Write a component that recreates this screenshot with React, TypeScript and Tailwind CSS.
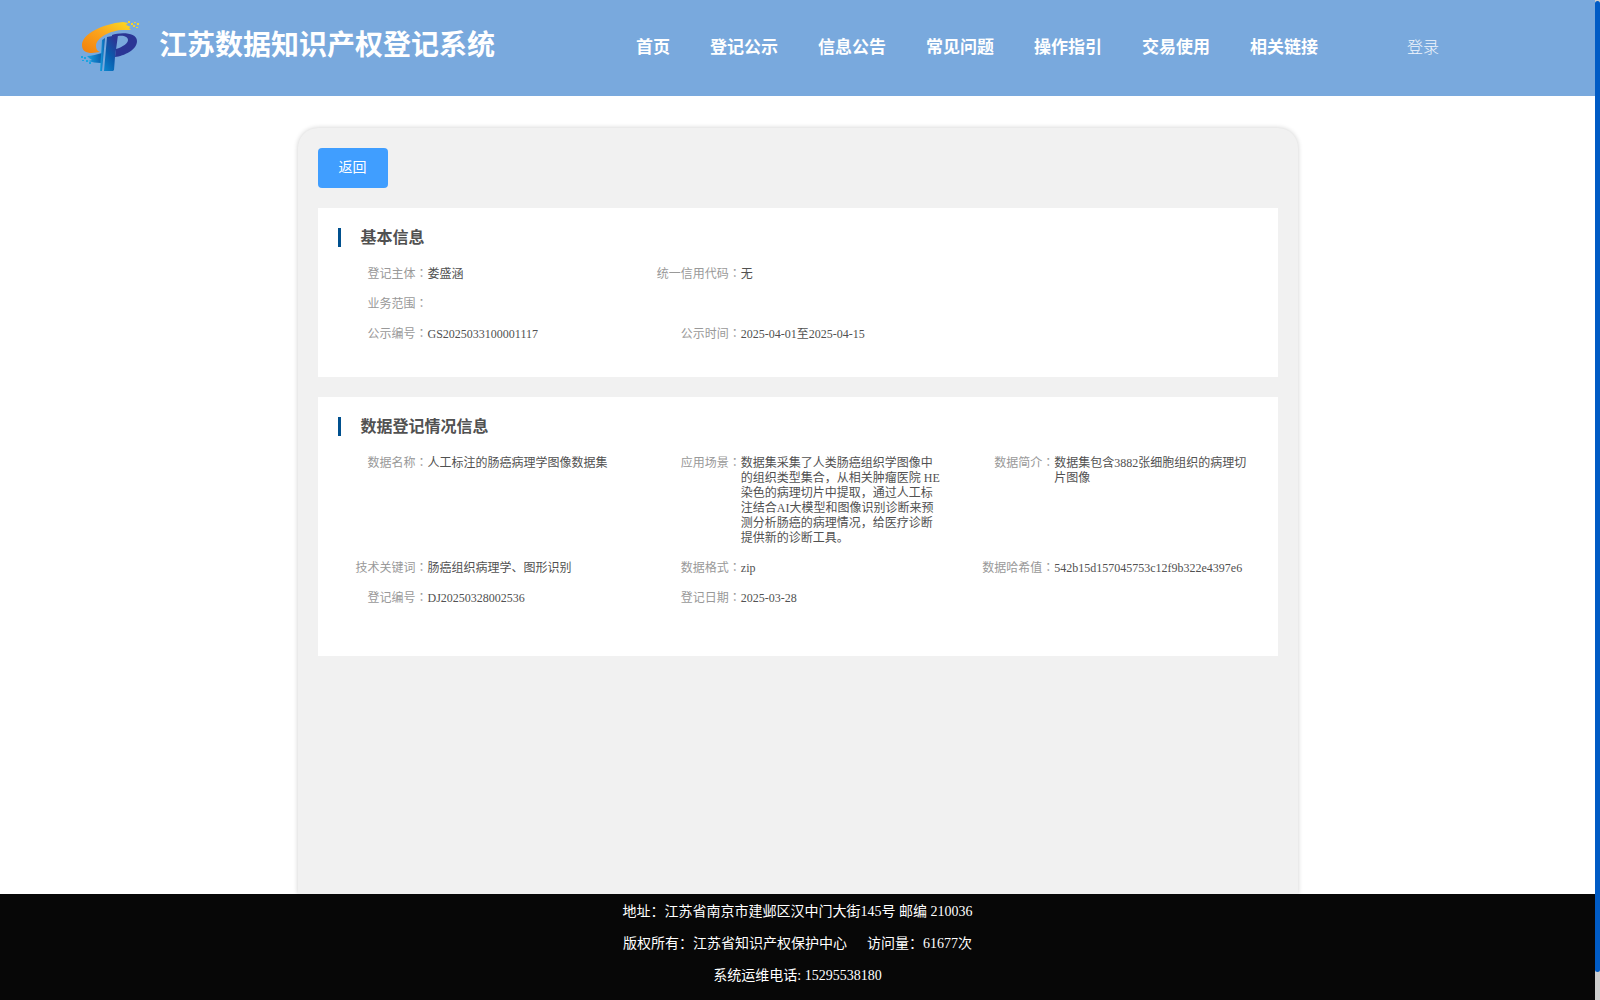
import React from "react";

const navItems = ["首页", "登记公示", "信息公告", "常见问题", "操作指引", "交易使用", "相关链接"];

type Item = { label: string; value: string };

const basicInfo: (Item | null)[] = [
  { label: "登记主体", value: "娄盛涵" },
  { label: "统一信用代码", value: "无" },
  null,
  { label: "业务范围", value: "" },
  null,
  null,
  { label: "公示编号", value: "GS2025033100001117" },
  { label: "公示时间", value: "2025-04-01至2025-04-15" },
];

const dataInfo: (Item | null)[] = [
  { label: "数据名称", value: "人工标注的肠癌病理学图像数据集" },
  {
    label: "应用场景",
    value:
      "数据集采集了人类肠癌组织学图像中的组织类型集合，从相关肿瘤医院 HE染色的病理切片中提取，通过人工标注结合AI大模型和图像识别诊断来预测分析肠癌的病理情况，给医疗诊断提供新的诊断工具。",
  },
  { label: "数据简介", value: "数据集包含3882张细胞组织的病理切片图像" },
  { label: "技术关键词", value: "肠癌组织病理学、图形识别" },
  { label: "数据格式", value: "zip" },
  { label: "数据哈希值", value: "542b15d157045753c12f9b322e4397e6" },
  { label: "登记编号", value: "DJ20250328002536" },
  { label: "登记日期", value: "2025-03-28" },
];

function Logo() {
  return (
    <svg viewBox="0 0 60 52" className="h-[52px] w-[60px] shrink-0" aria-hidden="true">
      <defs>
        <linearGradient id="swoosh" x1="0" y1="1" x2="1" y2="0">
          <stop offset="0" stopColor="#f07f0c" />
          <stop offset="0.5" stopColor="#fba31c" />
          <stop offset="1" stopColor="#fbdc22" />
        </linearGradient>
        <linearGradient id="stem" x1="0" y1="1" x2="0.6" y2="0">
          <stop offset="0" stopColor="#0a86cf" />
          <stop offset="0.5" stopColor="#0a5cad" />
          <stop offset="1" stopColor="#2b3695" />
        </linearGradient>
        <linearGradient id="tail" x1="0" y1="0" x2="1" y2="0">
          <stop offset="0" stopColor="#18a4e2" />
          <stop offset="1" stopColor="#0a5cad" />
        </linearGradient>
      </defs>
      <path d="M43 2 C22 4 2 14 2 25 C2 31 6 33 12 33 L20 32 C17 31 16 29 16 26 C16 18 30 10 44 10 L51 10 L49 8 L51 7 L46 5 L48 3 Z" fill="url(#swoosh)" />
      <path d="M48 1h2v2h-2z M51 3h2v2h-2z M54 2h2v1h-2z M53 5h2v2h-2z M57 3h2v2h-2z M56 7h2v1h-2z" fill="#f5d42b" />
      <path d="M7 36 C12 36 17 34 22 33 L21 43 C16 43 12 42 8 41 L12 40 L9 38 Z" fill="url(#tail)" />
      <path d="M1 36h2v2H1z M4 37h2v2H4z M2 40h2v1H2z M6 40h2v2H6z M9 42h2v2H9z" fill="#18a4e2" />
      <path d="M22 20 L25 18 L22 51 L20 51 Z" fill="url(#tail)" />
      <path d="M27 17 L38 15 L35 37 L34 50 L33 51 L24 51 Z" fill="url(#stem)" />
      <path d="M32 15 C40 12 57 12 57 21 C57 30 44 36 35 37 L36 29 C43 27 48 23 48 20 C48 17 44 15 38 16 L32 16 Z" fill="#2b3695" />
    </svg>
  );
}

function Section({ title, items, className }: { title: string; items: (Item | null)[]; className: string }) {
  return (
    <section className={`bg-white pt-5 pl-5 ${className}`}>
      <h2 className="border-l-3 border-[#00508e] pl-5 text-base leading-[19px] font-bold text-[#515151]">{title}</h2>
      <dl className="mt-5 grid grid-cols-3 gap-y-[15px] text-xs leading-[15px]">
        {items.map((item, i) =>
          item ? (
            <div key={i} className="flex h-full">
              <dt className="w-[90px] shrink-0 text-right whitespace-nowrap text-[#999]">
                {item.label}
                <span className="font-['Noto_Sans_CJK_TC',sans-serif] leading-none">：</span>
              </dt>
              <dd className="w-[202px] text-[#515151]">{item.value}</dd>
            </div>
          ) : (
            <div key={i} />
          )
        )}
      </dl>
    </section>
  );
}

function App() {
  return (
    <div className="flex min-h-screen bg-white font-['Liberation_Serif','Noto_Sans_CJK_SC',serif]">
      <div className="flex min-w-0 flex-1 flex-col">
        <header className="flex h-24 items-center bg-[#79a9dd] pr-[156px] pl-20 whitespace-nowrap text-white">
          <div className="flex items-center pb-1">
            <Logo />
            <h1 className="ml-[19px] text-[28px] leading-8 font-bold">江苏数据知识产权登记系统</h1>
          </div>
          <nav className="ml-auto flex gap-10 text-[17px] leading-6 font-bold">
            {navItems.map((item) => (
              <a key={item} href="#">{item}</a>
            ))}
          </nav>
          <a href="#" className="ml-[89px] text-base font-light text-white/90">登录</a>
        </header>

        <main className="flex flex-1 flex-col items-center pt-8">
          <div className="w-full max-w-[1000px] flex-1 rounded-t-[20px] bg-[#f1f1f1] p-5 shadow-[0_0_5px_rgba(0,0,0,0.2)]">
            <button type="button" className="h-10 w-[70px] rounded bg-[#409eff] text-sm text-white">返回</button>
            <Section title="基本信息" items={basicInfo} className="mt-5 pb-[35px]" />
            <Section title="数据登记情况信息" items={dataInfo} className="mt-5 pb-[50px]" />
          </div>
        </main>

        <footer className="relative bg-[#070707] pt-[2px] pb-2 text-center text-sm leading-8 text-white">
          <p>地址：江苏省南京市建邺区汉中门大街145号 邮编 210036</p>
          <p>
            版权所有：江苏省知识产权保护中心
            <span className="ml-5">访问量：61677次</span>
          </p>
          <p>系统运维电话: 15295538180</p>
        </footer>
      </div>

      <div className="flex w-[5px] shrink-0 flex-col bg-[#cdcdcd] pt-px pb-7">
        <div className="flex-1 rounded-full bg-[#005bc5]" />
      </div>
    </div>
  );
}

export default App;
